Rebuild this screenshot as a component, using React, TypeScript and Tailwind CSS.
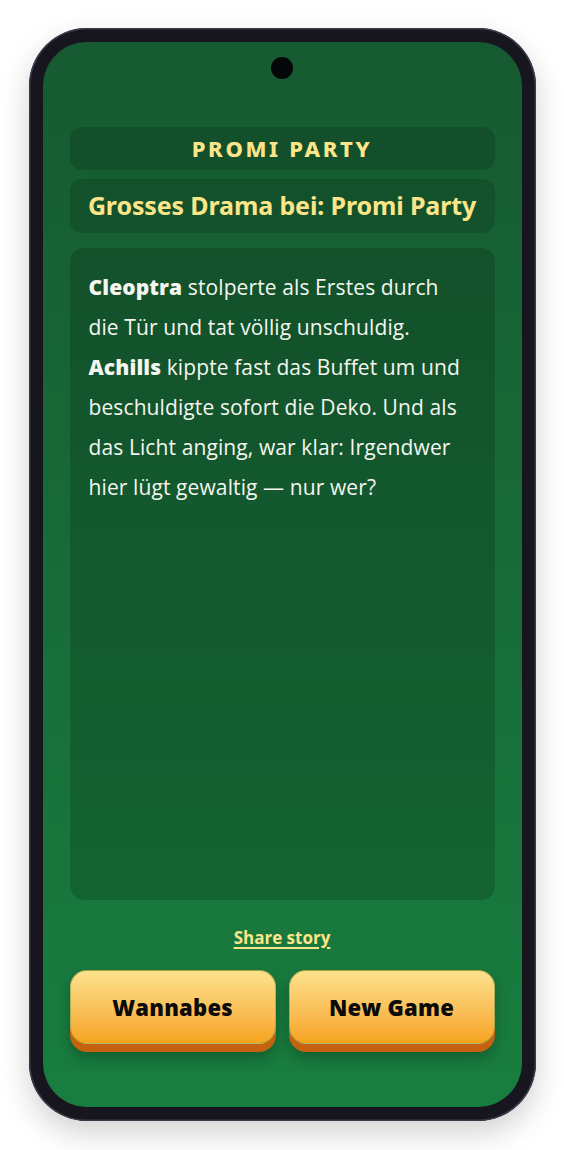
import React from "react";

export default function App() {
  const lines: React.ReactNode[] = [
    <><b className="font-extrabold">Cleoptra</b> stolperte als Erstes durch</>,
    <>die Tür und tat völlig unschuldig.</>,
    <><b className="font-extrabold">Achills</b> kippte fast das Buffet um und</>,
    <>beschuldigte sofort die Deko. Und als</>,
    <>das Licht anging, war klar: Irgendwer</>,
    <>hier lügt gewaltig — nur wer?</>,
  ];
  return (
    <div className="w-[564px] h-[1150px] bg-white flex justify-center pt-[28px]" style={{ fontFamily: "'Open Sans', 'Noto Sans', sans-serif" }}>
      <div className="w-[507px] h-[1093px] rounded-[58px] bg-[#17161f] p-[14px] shadow-[0_12px_30px_rgba(0,0,0,0.18),inset_0_0_0_1.5px_#3b3a48]">
        <div className="relative w-full h-full rounded-[44px] overflow-hidden bg-gradient-to-b from-[#165a31] to-[#187e3f] flex flex-col px-[27px] pt-[85px] pb-[55px]">
          <div className="absolute left-1/2 top-[15px] -translate-x-1/2 w-[22px] h-[22px] rounded-full bg-[#050607]" />
          <div className="h-[43px] rounded-[12px] bg-[rgba(0,0,0,0.14)] flex items-center justify-center">
            <span className="text-[22px] font-extrabold tracking-[0.12em] text-[#fce588]" style={{ fontFamily: "'Noto Sans', sans-serif" }}>PROMI PARTY</span>
          </div>
          <div className="mt-[9px] h-[54px] rounded-[12px] bg-[rgba(0,0,0,0.14)] flex items-center justify-center">
            <span className="text-[25px] font-bold text-[#fce588] tracking-[-0.005em]" style={{ fontFamily: "'Noto Sans', sans-serif" }}>Grosses Drama bei: Promi Party</span>
          </div>
          <div className="mt-[15px] h-[652px] rounded-[14px] bg-[rgba(0,0,0,0.16)] px-[19px] pt-[19px]">
            <div className="text-[21px] leading-[40px] text-[#f4f6ef] tracking-[0.005em]">
              {lines.map((l, i) => (
                <div key={i} className="whitespace-nowrap">{l}</div>
              ))}
            </div>
          </div>
          <div className="flex-1" />
          <div className="flex justify-center">
            <span className="text-[17px] font-bold text-[#fce588] underline underline-offset-[3px] decoration-[1.5px]">Share story</span>
          </div>
          <div className="mt-[20px] flex gap-[13px]">
            {["Wannabes", "New Game"].map((t) => (
              <div key={t} className="flex-1 h-[82px] rounded-[17px] bg-[#c4620f] shadow-[0_6px_14px_rgba(0,0,0,0.25)]">
                <div className="h-[74px] rounded-[17px] border-[1.5px] border-[rgba(120,160,90,0.6)] bg-gradient-to-b from-[#fde28c] to-[#f5a316] flex items-center justify-center">
                  <span className="text-[22px] font-extrabold text-[#0b0b0b] tracking-[0.01em]">{t}</span>
                </div>
              </div>
            ))}
          </div>
        </div>
      </div>
    </div>
  );
}
